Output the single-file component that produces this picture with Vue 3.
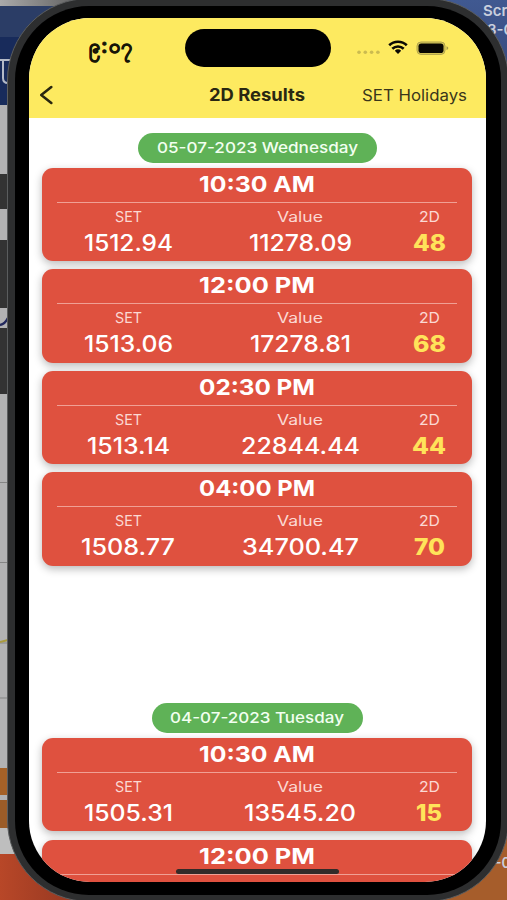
<script setup>
import { h } from 'vue'

// Single line of text fitted to a given advance width.
const FitText = (p) =>
  h('svg', { width: p.w, height: p.lh, viewBox: `0 0 ${p.w} ${p.lh}`, style: { display: 'block', overflow: 'visible', flex: 'none' } }, [
    h('text', {
      x: 0, y: p.base, fill: p.color || '#fff', 'font-size': p.size, 'font-weight': p.weight || 400,
      'font-family': p.family || 'Inter, "Liberation Sans", sans-serif', textLength: p.w, lengthAdjust: 'spacingAndGlyphs',
    }, p.t),
  ])
FitText.props = ['t', 'w', 'lh', 'base', 'size', 'weight', 'color', 'family']

const days = [
  {
    date: '05-07-2023 Wednesday', pill: 239, w: 201,
    rows: [
      { time: '10:30 AM', set: '1512.94', sw: 89, value: '11278.09', vw: 103, two: '48', tw: 33 },
      { time: '12:00 PM', set: '1513.06', sw: 89, value: '17278.81', vw: 101, two: '68', tw: 33 },
      { time: '02:30 PM', set: '1513.14', sw: 83, value: '22844.44', vw: 119, two: '44', tw: 34 },
      { time: '04:00 PM', set: '1508.77', sw: 94, value: '34700.47', vw: 117, two: '70', tw: 31 },
    ],
  },
  {
    date: '04-07-2023 Tuesday', pill: 211, w: 174,
    rows: [
      { time: '10:30 AM', set: '1505.31', sw: 89, value: '13545.20', vw: 112, two: '15', tw: 26 },
      { time: '12:00 PM' },
    ],
  },
]
</script>

<template>
  <div class="stage">
    <svg class="backdrop" width="507" height="900" viewBox="0 0 507 900">
      <defs>
        <linearGradient id="sky" x1="0" y1="0" x2="0" y2="1">
          <stop offset="0" stop-color="#405991" /><stop offset="1" stop-color="#344477" />
        </linearGradient>
        <linearGradient id="rust" x1="0" y1="0" x2="1" y2="0">
          <stop offset="0" stop-color="#b84728" /><stop offset="1" stop-color="#7c2d1c" />
        </linearGradient>
        <linearGradient id="top" x1="0" y1="0" x2="1" y2="0">
          <stop offset="0" stop-color="#aaa" /><stop offset="1" stop-color="#555" />
        </linearGradient>
      </defs>
      <rect width="507" height="900" fill="#b2b2b3" />
      <rect width="90" height="6" fill="url(#top)" />
      <rect y="6" width="90" height="31" fill="#2b3d66" />
      <rect y="37" width="90" height="68" fill="#182b5b" />
      <path d="M0 60h10M3 60v18q0 5 5 5" fill="none" stroke="#b4bac7" stroke-width="2" />
      <rect y="174" width="7" height="35" fill="#333" />
      <rect y="240" width="7" height="68" fill="#333" />
      <rect y="328" width="7" height="66" fill="#333" />
      <path d="M0 325q5-1 8-7" fill="none" stroke="#22285c" stroke-width="2.5" />
      <path d="M0 482.5h8M0 562.5h8M0 643h8M0 698h8" stroke="#858585" />
      <path d="M0 642l8-2" stroke="#a99a3e" stroke-width="2" />
      <rect y="768" width="10" height="27" fill="#a56127" />
      <rect y="800" width="14" height="28" fill="#9b5c28" />
      <path d="M0 828h30v27H0z" fill="#bebebe" />
      <rect y="854" width="130" height="46" fill="url(#rust)" />
      <rect x="420" width="87" height="100" fill="url(#sky)" />
      <rect x="400" y="800" width="107" height="100" fill="#a65d2b" />
      <rect x="499" y="94" width="8" height="710" fill="#2e2e2e" />
      <g font-family="Inter, sans-serif" font-size="15" font-weight="600" fill="#c9cfdd">
        <text x="483" y="16">Scr</text>
        <text x="487" y="35">3-0</text>
        <text x="495" y="868" font-size="14">-0</text>
      </g>
    </svg>

    <div class="frame">
      <div class="bezel">
        <div class="screen">
          <header class="top">
            <div class="status">
              <div class="clock">၉:၀၇</div>
              <div class="island"></div>
              <svg class="signals" width="93" height="16" viewBox="0 0 93 16">
                <g fill="#cbbb50">
                  <circle cx="2" cy="12.2" r="1.8" /><circle cx="8.3" cy="12.2" r="1.8" />
                  <circle cx="14.6" cy="12.2" r="1.8" /><circle cx="20.9" cy="12.2" r="1.8" />
                </g>
                <g fill="none" stroke="#0b0a04" stroke-width="2.6">
                  <path d="M32.2 5.2a12.8 12.8 0 0 1 17.6 0" />
                  <path d="M35.3 8.8a8.2 8.2 0 0 1 11.4 0" />
                </g>
                <path d="M37.8 10.7a4.7 4.7 0 0 1 6.4 0L41 14z" fill="#0b0a04" />
                <rect x="60" y="2" width="28" height="12.4" rx="4" fill="#d9c957" stroke="#b0a34d" stroke-width="1" />
                <rect x="61.5" y="3.4" width="25" height="9.6" rx="2.8" fill="#080703" />
                <path d="M89.5 6.2q1.8.6 1.8 1.9t-1.8 1.9z" fill="#a99d4b" />
              </svg>
            </div>
            <nav class="nav">
              <svg width="15" height="20" viewBox="0 0 15 20">
                <path d="M13.2 1.4 2.4 10l10.8 8.6" fill="none" stroke="#29270f" stroke-width="2.7" stroke-linecap="round" stroke-linejoin="round" />
              </svg>
              <FitText class="title" t="2D Results" :w="96" :lh="20" :base="16.4" :size="17" :weight="700" color="#292712" />
              <FitText t="SET Holidays" :w="105" :lh="20" :base="16" :size="16.2" color="#39361b" />
            </nav>
          </header>

          <main class="list">
            <section v-for="day in days" :key="day.date" class="day">
              <div class="pill" :style="{ width: day.pill + 'px' }">
                <FitText :t="day.date" :w="day.w" :lh="30" :base="20" :size="15" :weight="500" color="#f2fff0" />
              </div>
              <article v-for="row in day.rows" :key="row.time" class="card">
                <div class="time">
                  <FitText :t="row.time" :w="116" :lh="34" :base="24.3" :size="22" :weight="700" />
                </div>
                <div v-if="row.set" class="cells">
                  <div class="cell">
                    <FitText t="SET" :w="27" :lh="26" :base="19.2" :size="14" color="#fbd9d3" />
                    <FitText :t="row.set" :w="row.sw" :lh="30" :base="21.7" :size="22.4" :weight="500" />
                  </div>
                  <div class="cell">
                    <FitText t="Value" :w="46" :lh="26" :base="19.2" :size="14" color="#fbd9d3" />
                    <FitText :t="row.value" :w="row.vw" :lh="30" :base="21.7" :size="22.4" :weight="500" />
                  </div>
                  <div class="cell">
                    <FitText t="2D" :w="21" :lh="26" :base="19.2" :size="14" color="#fbd9d3" />
                    <FitText :t="row.two" :w="row.tw" :lh="30" :base="21.7" :size="22.4" :weight="800" color="#ffe35a" />
                  </div>
                </div>
              </article>
            </section>
          </main>
          <div class="home"></div>
        </div>
      </div>
    </div>
  </div>
</template>

<style>
body { background: #b2b2b3; overflow: hidden; }
</style>

<style scoped>
.stage { position: relative; width: 507px; height: 900px; overflow: hidden; font-family: Inter, sans-serif; }
.backdrop { position: absolute; left: 0; top: 0; }
.frame {
  position: relative; box-sizing: border-box; width: 502px; height: 904px; margin: -2px 0 0 7px;
  padding: 7px; border: 1px solid #5b5d5e; border-radius: 82px; background: #2d2e2f;
}
.bezel { box-sizing: border-box; width: 486px; height: 889px; padding: 12px 14px 13px; border-radius: 74px; background: #000; }
.screen { position: relative; width: 457px; height: 864px; overflow: hidden; border-radius: 61px; background: #fff; }
.top { height: 100px; background: #fdea60; }
.status { display: flex; align-items: center; height: 60px; padding-left: 60px; }
.clock {
  width: 96px; padding-bottom: 5px; font: 700 20px/26px "Noto Sans", Inter, sans-serif; color: #171507;
  letter-spacing: 1.6px; -webkit-text-stroke: .8px #171507;
}
.island { width: 146px; height: 38px; border-radius: 19px; background: #000; }
.signals { margin-left: 26px; }
.nav { display: flex; align-items: center; height: 34px; padding: 0 19px 0 10px; }
.title { margin: 0 57px 0 156px; }
.list { padding: 14.5px 14px 0 13.5px; }
.day { display: flex; flex-direction: column; align-items: center; height: 570.3px; }
.pill { display: flex; justify-content: center; flex: none; height: 30px; margin-bottom: 5.2px; border-radius: 15px; background: #5fb257; }
.card {
  flex: none; width: 430px; height: 93.4px; margin-bottom: 8.2px; border-radius: 11px; background: #df513f;
  box-shadow: 0 3px 8px rgba(0, 0, 0, .28);
}
.time { display: flex; justify-content: center; height: 34px; margin: 0 15px; border-bottom: 1px solid #f0a095; }
.cells { display: grid; grid-template-columns: 2fr 2fr 1fr; }
.cell { display: flex; flex-direction: column; align-items: center; }
.home { position: absolute; left: 147px; bottom: 8px; width: 163px; height: 5px; border-radius: 3px; background: #332b29; }
</style>
